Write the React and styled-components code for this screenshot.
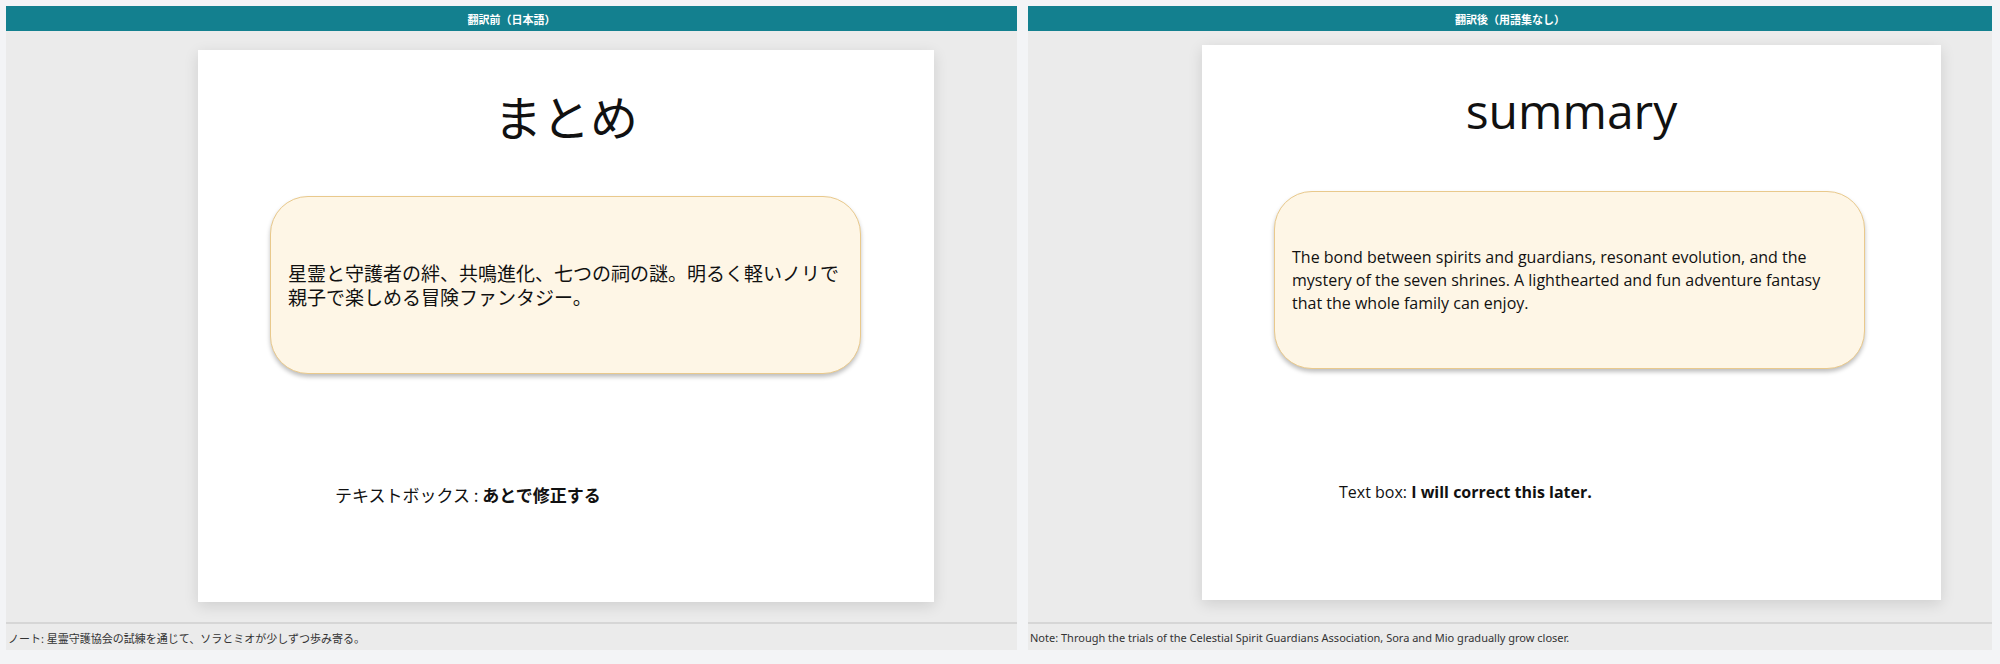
import React from "react";
import styled, { createGlobalStyle } from "styled-components";

const G = createGlobalStyle`
  html,body{margin:0;background:#f3f4f6;}
  body{font-family:"Noto Sans","Noto Sans CJK JP",sans-serif;}
`;
const Page = styled.div`display:flex;gap:11px;padding:6px 8px 8px 6px;height:650px;box-sizing:border-box;`;
const Panel = styled.div`width:${p=>p.w}px;display:flex;flex-direction:column;background:#ebebeb;height:650px;`;
const Header = styled.div`height:25px;background:#13808f;color:#fff;font-size:11px;font-weight:700;display:flex;align-items:center;justify-content:center;font-family:"Noto Sans CJK JP",sans-serif;`;
const Stage = styled.div`height:591px;box-sizing:border-box;padding-top:${p=>p.top}px;padding-left:${p=>p.left}px;`;
const Slide = styled.div`position:relative;width:${p=>p.w}px;height:${p=>p.h}px;background:#fff;box-shadow:0 4px 14px rgba(0,0,0,0.12);display:flex;flex-direction:column;`;
const Title = styled.div`height:130px;display:flex;align-items:center;justify-content:center;font-size:48px;color:#111;font-family:${p=>p.f};`;
const Box = styled.div`margin:16px 0 0 72px;width:591px;height:178px;box-sizing:border-box;border:1.5px solid #e9c98c;border-radius:38px;background:#fef6e6;box-shadow:0 3px 4px rgba(0,0,0,0.25);display:flex;align-items:center;padding:0 17px;font-size:${p=>p.fs}px;line-height:${p=>p.lh}px;color:#111;font-family:${p=>p.f};`;
const Caption = styled.div`margin:${p=>p.mt}px 0 0 137px;font-size:${p=>p.fs}px;color:#111;font-family:${p=>p.f};`;
const Note = styled.div`flex:1;border-top:2px solid #d6d6d6;font-size:11px;color:#333;padding:6px 2px 0;font-family:"Noto Sans","Noto Sans CJK JP",sans-serif;`;

const JP = `"Noto Sans CJK JP",sans-serif`;
const EN = `"Open Sans","Noto Sans",sans-serif`;

export default function App(){
  return <><G/><Page>
    <Panel w={1011}>
      <Header>翻訳前（日本語）</Header>
      <Stage top={19} left={192}>
        <Slide w={736} h={552}>
          <Title f={JP}>まとめ</Title>
          <Box f={JP} fs={19} lh={24}>星霊と守護者の絆、共鳴進化、七つの祠の謎。明るく軽いノリで親子で楽しめる冒険ファンタジー。</Box>
          <Caption f={JP} fs={17} mt={108}>テキストボックス : <b>あとで修正する</b></Caption>
        </Slide>
      </Stage>
      <Note>ノート: 星霊守護協会の試練を通じて、ソラとミオが少しずつ歩み寄る。</Note>
    </Panel>
    <Panel w={964}>
      <Header>翻訳後（用語集なし）</Header>
      <Stage top={14} left={174}>
        <Slide w={739} h={555}>
          <Title f={EN}>summary</Title>
          <Box f={EN} fs={16} lh={23}>The bond between spirits and guardians, resonant evolution, and the mystery of the seven shrines. A lighthearted and fun adventure fantasy that the whole family can enjoy.</Box>
          <Caption f={EN} fs={16} mt={112}>Text box: <b>I will correct this later.</b></Caption>
        </Slide>
      </Stage>
      <Note>Note: Through the trials of the Celestial Spirit Guardians Association, Sora and Mio gradually grow closer.</Note>
    </Panel>
  </Page></>;
}
